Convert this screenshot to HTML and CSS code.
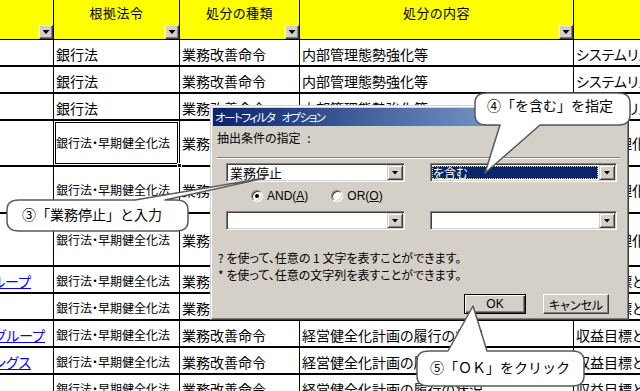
FILE: index.html
```html
<!DOCTYPE html>
<html lang="ja">
<head>
  <meta charset="UTF-8">
  <title>オートフィルタ オプション</title>
  <link rel="stylesheet" href="styles.css">
</head>
<body>
  <div class="sheet">
    <div class="row head">
      <div class="cell"><span class="filter"></span></div>
      <div class="cell"><span class="label">根拠法令</span><span class="filter"></span></div>
      <div class="cell"><span class="label">処分の種類</span><span class="filter"></span></div>
      <div class="cell"><span class="label">処分の内容</span><span class="filter"></span></div>
      <div class="cell"></div>
    </div>

    <div class="row">
      <div class="cell"></div>
      <div class="cell">銀行法</div>
      <div class="cell">業務改善命令</div>
      <div class="cell">内部管理態勢強化等</div>
      <div class="cell">システムリスク管理態勢</div>
    </div>
    <div class="row">
      <div class="cell"></div>
      <div class="cell">銀行法</div>
      <div class="cell">業務改善命令</div>
      <div class="cell">内部管理態勢強化等</div>
      <div class="cell">システムリスク管理態勢</div>
    </div>
    <div class="row">
      <div class="cell"></div>
      <div class="cell">銀行法</div>
      <div class="cell">業務改善命令</div>
      <div class="cell">内部管理態勢強化等</div>
      <div class="cell">システムリスク管理態勢</div>
    </div>
    <div class="row tall h46">
      <div class="cell"></div>
      <div class="cell small sel">銀行法・早期健全化法</div>
      <div class="cell">業務停止命令</div>
      <div class="cell">経営健全化計画の履行</div>
      <div class="cell">経営合理化等</div>
    </div>
    <div class="row tall h47">
      <div class="cell"></div>
      <div class="cell small">銀行法・早期健全化法</div>
      <div class="cell">業務停止命令</div>
      <div class="cell">経営健全化計画の履行</div>
      <div class="cell">経営合理化等</div>
    </div>
    <div class="row tall h53">
      <div class="cell"></div>
      <div class="cell small">銀行法・早期健全化法</div>
      <div class="cell">業務停止命令</div>
      <div class="cell">経営健全化計画の履行</div>
      <div class="cell">経営合理化等</div>
    </div>
    <div class="row">
      <div class="cell name"><a href="#">みずほフィナンシャルグループ</a></div>
      <div class="cell small">銀行法・早期健全化法</div>
      <div class="cell">業務改善命令</div>
      <div class="cell">経営健全化計画の履行の状況</div>
      <div class="cell">収益目標との乖離</div>
    </div>
    <div class="row">
      <div class="cell"></div>
      <div class="cell small">銀行法・早期健全化法</div>
      <div class="cell">業務改善命令</div>
      <div class="cell">経営健全化計画の履行の状況</div>
      <div class="cell">収益目標との乖離</div>
    </div>
    <div class="row">
      <div class="cell name near"><a href="#">三井住友フィナンシャルグループ</a></div>
      <div class="cell small">銀行法・早期健全化法</div>
      <div class="cell">業務改善命令</div>
      <div class="cell">経営健全化計画の履行の状況</div>
      <div class="cell">収益目標との乖離</div>
    </div>
    <div class="row">
      <div class="cell name"><a href="#">りそなホールディングス</a></div>
      <div class="cell small">銀行法・早期健全化法</div>
      <div class="cell">業務改善命令</div>
      <div class="cell">経営健全化計画の履行の状況</div>
      <div class="cell">収益目標との乖離</div>
    </div>
    <div class="row">
      <div class="cell"></div>
      <div class="cell small">銀行法・早期健全化法</div>
      <div class="cell">業務改善命令</div>
      <div class="cell">経営健全化計画の履行の状況</div>
      <div class="cell">収益目標との乖離</div>
    </div>
  </div>

  <div class="dialog">
    <div class="titlebar">オートフィルタ オプション</div>
    <div class="dlg-body">
      <div class="dlg-label">抽出条件の指定 :</div>
      <div class="sep"></div>
      <div class="combo-row">
        <div class="combo left"><span class="field">業務停止</span><span class="drop"></span></div>
        <div class="combo right focus"><span class="field">を含む</span><span class="drop"></span></div>
      </div>
      <div class="radio-row">
        <span class="radio on"></span><span class="rlabel">AND(<span class="key">A</span>)</span>
        <span class="radio"></span><span class="rlabel">OR(<span class="key">O</span>)</span>
      </div>
      <div class="combo-row second">
        <div class="combo left"><span class="field"></span><span class="drop"></span></div>
        <div class="combo right"><span class="field"></span><span class="drop"></span></div>
      </div>
      <p class="help">? を使って、任意の 1 文字を表すことができます。<br>* を使って、任意の文字列を表すことができます。</p>
      <div class="buttons">
        <button class="btn default">OK</button>
        <button class="btn">キャンセル</button>
      </div>
    </div>
  </div>

  <!-- callouts -->
  <div class="callout c3">
    <svg width="265" height="62" viewBox="0 0 265 62">
      <path d="M17 26 H133 L263 4 L163 26 H174 Q186 26 186 36 V47 Q186 57 174 57 H17 Q5 57 5 47 V36 Q5 26 17 26 Z"/>
    </svg>
    <span class="ctext">③「業務停止」と入力</span>
  </div>
  <div class="callout c4">
    <svg width="165" height="90" viewBox="0 0 165 90">
      <path d="M17 5 H148 Q160 5 160 15 V27 Q160 37 148 37 H70 L15 85 L30 37 H17 Q5 37 5 27 V15 Q5 5 17 5 Z"/>
    </svg>
    <span class="ctext">④「を含む」を指定</span>
  </div>
  <div class="callout c5">
    <svg width="178" height="90" viewBox="0 0 178 90">
      <path d="M17 50 H36 L61 5 L75 50 H160 Q172 50 172 60 V75 Q172 85 160 85 H17 Q5 85 5 75 V60 Q5 50 17 50 Z"/>
    </svg>
    <span class="ctext">⑤「ＯＫ」をクリック</span>
  </div>
</body>
</html>
```

FILE: styles.css
```css
body {
  margin: 0;
  width: 640px;
  height: 391px;
  overflow: hidden;
  position: relative;
  background: #fff;
  font-family: "Noto Sans CJK JP", sans-serif;
  font-feature-settings: "palt";
  color: #000;
}

/* sheet */
.sheet {
  display: flex;
  flex-direction: column;
}

.row {
  display: grid;
  grid-template-columns: 54px 126px 120px 274px 1fr;
  height: 27px;
  border-bottom: 2px solid #000;
  box-sizing: border-box;
}

.row.h46 { height: 46px; }
.row.h47 { height: 47px; }
.row.h53 { height: 53px; }

.cell {
  display: flex;
  align-items: center;
  padding: 3px 0 0 2px;
  border-right: 1px solid #000;
  overflow: hidden;
  white-space: nowrap;
  font-size: 14px;
  line-height: 18px;
}

.cell:last-child {
  border-right: 0;
}

.tall .cell {
  padding-top: 0;
}

.cell.small {
  font-size: 12px;
}

.cell.name {
  justify-content: flex-end;
  padding: 3px 22px 0 0;
}

.cell.name.near {
  padding-right: 8px;
}

.cell a {
  color: #00f;
  text-decoration: underline;
}

.cell.sel {
  position: relative;
  overflow: visible;
  box-shadow: inset 0 0 0 1px #fff, inset 0 0 0 2px #000;
}

.cell.sel::after {
  content: "";
  position: absolute;
  right: -3px;
  bottom: -3px;
  width: 3px;
  height: 3px;
  background: #000;
  border: 1px solid #fff;
}

.row.head {
  height: 40px;
  border-bottom-width: 1px;
  background: #ff0;
}

.head .cell {
  flex-direction: column;
  align-items: stretch;
  padding: 4px 0 0;
}

.head .label {
  text-align: center;
  font-size: 13px;
  line-height: 18px;
  letter-spacing: 0.5px;
}

.filter {
  margin-top: auto;
  align-self: flex-end;
  width: 14px;
  height: 14px;
  box-sizing: border-box;
  background: #d4d0c8;
  border: 1px solid;
  border-color: #fff #404040 #404040 #fff;
  box-shadow: inset -1px -1px #808080;
  display: flex;
  align-items: center;
  justify-content: center;
}

.filter::after,
.drop::after {
  content: "";
  width: 7px;
  height: 4px;
  background: #000;
  clip-path: polygon(0 0, 100% 0, 50% 100%);
}

/* dialog */
.dialog {
  position: absolute;
  left: 210px;
  top: 105px;
  width: 419px;
  height: 215px;
  box-sizing: border-box;
  padding: 2px;
  background: #d4d0c8;
  border: 1px solid;
  border-color: #d4d0c8 #404040 #404040 #d4d0c8;
  box-shadow: inset 1px 1px #fff, inset -1px -1px #808080;
  font-size: 12px;
}

.titlebar {
  height: 18px;
  line-height: 18px;
  padding-left: 2px;
  color: #fff;
  font-size: 11.5px;
  letter-spacing: -1.5px;
  word-spacing: 6px;
  background: linear-gradient(90deg, #0a246a, #a6caf0);
  white-space: nowrap;
}

.dlg-body {
  padding: 4px 4px 0 4px;
}

.dlg-label {
  line-height: 16px;
  word-spacing: 4px;
}

.sep {
  margin-top: 11px;
  margin-right: 2px;
  height: 1px;
  background: #808080;
  border-bottom: 1px solid #fff;
}

.combo-row {
  display: flex;
  gap: 25px;
  margin-top: 4px;
  padding-left: 9px;
}

.combo-row.second {
  margin-top: 7px;
}

.combo {
  display: flex;
  height: 19px;
  box-sizing: border-box;
  padding: 1px;
  background: #fff;
  border: 1px solid;
  border-color: #808080 #fff #fff #808080;
  box-shadow: inset 1px 1px #404040, inset -1px -1px #d4d0c8;
}

.combo.left { width: 179px; }
.combo.right { width: 187px; }

.combo .field {
  flex: 1;
  padding-left: 2px;
  font-size: 13px;
  line-height: 15px;
  white-space: nowrap;
}

.combo.focus .field {
  margin: 1px 1px 1px 0;
  padding-left: 1px;
  background: #0a246a;
  color: #fff;
  font-size: 12px;
  line-height: 13px;
  outline: 1px dotted #d8d8a0;
  outline-offset: -1px;
}

.drop {
  width: 16px;
  height: 15px;
  box-sizing: border-box;
  background: #d4d0c8;
  border: 1px solid;
  border-color: #d4d0c8 #404040 #404040 #d4d0c8;
  box-shadow: inset 1px 1px #fff, inset -1px -1px #808080;
  display: flex;
  align-items: center;
  justify-content: center;
}

.radio-row {
  display: flex;
  align-items: center;
  height: 16px;
  margin-top: 6px;
  padding-left: 34px;
  font-family: "Liberation Sans", "Noto Sans CJK JP", sans-serif;
}

.radio {
  position: relative;
  width: 12px;
  height: 12px;
  box-sizing: border-box;
  border-radius: 50%;
  background: #fff;
  border: 1px solid;
  border-color: #808080 #fff #fff #808080;
  box-shadow: inset 1px 1px #404040, inset -1px -1px #d4d0c8;
}

.radio.on::after {
  content: "";
  position: absolute;
  left: 3px;
  top: 3px;
  width: 4px;
  height: 4px;
  border-radius: 50%;
  background: #000;
}

.rlabel {
  margin-left: 4px;
  margin-right: 23px;
}

.key {
  text-decoration: underline;
}

.help {
  margin: 19px 0 0 1px;
  line-height: 17px;
}

.buttons {
  display: flex;
  justify-content: flex-end;
  gap: 17px;
  margin-top: 11px;
  padding-right: 13px;
}

.btn {
  height: 20px;
  padding: 0;
  box-sizing: border-box;
  background: #d4d0c8;
  font: 12px "Liberation Sans", "Noto Sans CJK JP", sans-serif;
  font-feature-settings: "palt";
  color: #000;
  border: 1px solid;
  border-color: #fff #404040 #404040 #fff;
  box-shadow: inset -1px -1px #808080;
  width: 66px;
}

.btn.default {
  width: 62px;
  border-color: #000;
  box-shadow: inset 1px 1px #fff, inset -1px -1px #404040, inset -2px -2px #808080;
}

/* callouts */
.callout {
  position: absolute;
}

.callout svg {
  display: block;
}

.callout path {
  fill: #fff;
  stroke: #5a5a5a;
  stroke-width: 1.5;
  stroke-linejoin: round;
}

.ctext {
  position: absolute;
  font-size: 14px;
  line-height: 16px;
  white-space: nowrap;
  font-feature-settings: normal;
}

.c3 { left: 2px; top: 174px; }
.c3 .ctext { left: 20px; top: 32px; }

.c4 { left: 470px; top: 88px; }
.c4 .ctext { left: 17px; top: 9px; }

.c5 { left: 412px; top: 301px; }
.c5 .ctext { left: 18px; top: 58px; }
```
